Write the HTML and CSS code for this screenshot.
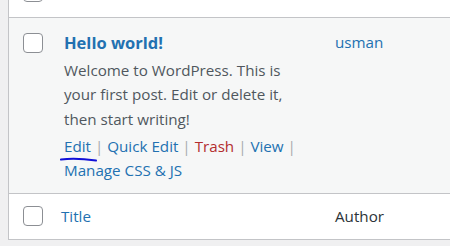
FILE: index.html
```html
<!DOCTYPE html>
<html>
<head>
<meta charset="utf-8">
<link rel="stylesheet" href="styles.css">
</head>
<body>
<div class="page">
  <div class="table">
    <div class="row row-top">
      <div class="check-col"><span class="cb cb-top"></span></div>
    </div>
    <div class="row row-post">
      <div class="check-col"><span class="cb"></span></div>
      <div class="title-col">
        <a class="row-title">Hello world!</a>
        <p class="excerpt">Welcome to WordPress. This is<br>your first post. Edit or delete it,<br>then start writing!</p>
        <div class="row-actions">
          <span class="act"><a class="edit-link">Edit<svg class="scribble" width="38" height="6" viewBox="0 0 38 6"><path d="M1 3.5 C 10 2.2, 22 2.4, 36 4.6" fill="none" stroke="#1010d8" stroke-width="2" stroke-linecap="round"/></svg></a> <span class="sep">|</span> </span><span class="act"><a>Quick Edit</a> <span class="sep">|</span> </span><span class="act"><a class="trash">Trash</a> <span class="sep">|</span> </span><span class="act"><a>View</a> <span class="sep">|</span> </span><span class="act"><a>Manage CSS &amp; JS</a></span>
        </div>
      </div>
      <div class="author-col"><a>usman</a></div>
    </div>
    <div class="row row-foot">
      <div class="check-col"><span class="cb"></span></div>
      <div class="title-col"><a class="foot-title">Title</a></div>
      <div class="author-col foot-author">Author</div>
    </div>
  </div>
</div>
</body>
</html>
```
FILE: styles.css
```css
html, body {
  margin: 0;
  padding: 0;
  background: #f0f0f1;
  overflow: hidden;
}
body {
  font-family: "Open Sans", "Noto Sans", sans-serif;
  font-size: 15.2px;
  color: #50575e;
  width: 450px;
  height: 246px;
}
.page {
  padding-left: 8px;
}
.table {
  width: 441px;
  background: #fff;
  border-left: 1px solid #c3c4c7;
  border-bottom: 1px solid #c3c4c7;
}
.row {
  display: flex;
  align-items: flex-start;
}
.row-top {
  height: 17px;
  overflow: hidden;
  border-bottom: 1px solid #c3c4c7;
}
.row-top .cb {
  margin-top: -18px;
}
.check-col {
  flex: 0 0 auto;
  width: 31px;
  padding-left: 14px;
}
.cb {
  display: block;
  box-sizing: border-box;
  width: 20px;
  height: 20px;
  border: 1px solid #8c8f94;
  border-radius: 4px;
  background: #fff;
}
.row-post {
  background: #f6f7f7;
  padding-top: 12px;
  padding-bottom: 10px;
  border-bottom: 1px solid #c3c4c7;
}
.row-post .cb {
  margin-top: 3px;
}
.title-col {
  flex: 0 0 auto;
  width: 271px;
  padding-left: 10px;
  line-height: 24.5px;
}
.row-title {
  display: block;
  font-weight: 700;
  font-size: 16.5px;
  color: #2271b1;
  line-height: 25px;
  margin-bottom: 2.5px;
}
.excerpt {
  margin: 0 0 2.5px;
}
.row-actions a {
  color: #2271b1;
}
.row-actions .trash {
  color: #b32d2e;
}
.sep {
  color: #a7aaad;
}
.edit-link {
  position: relative;
}
.scribble {
  position: absolute;
  left: -4px;
  top: 20px;
}
.author-col {
  line-height: 25px;
  color: #2271b1;
}
.row-foot {
  align-items: center;
  height: 45px;
}
.foot-title {
  color: #2271b1;
  margin-left: -3px;
}
.foot-author {
  color: #2c3338;
}
```
